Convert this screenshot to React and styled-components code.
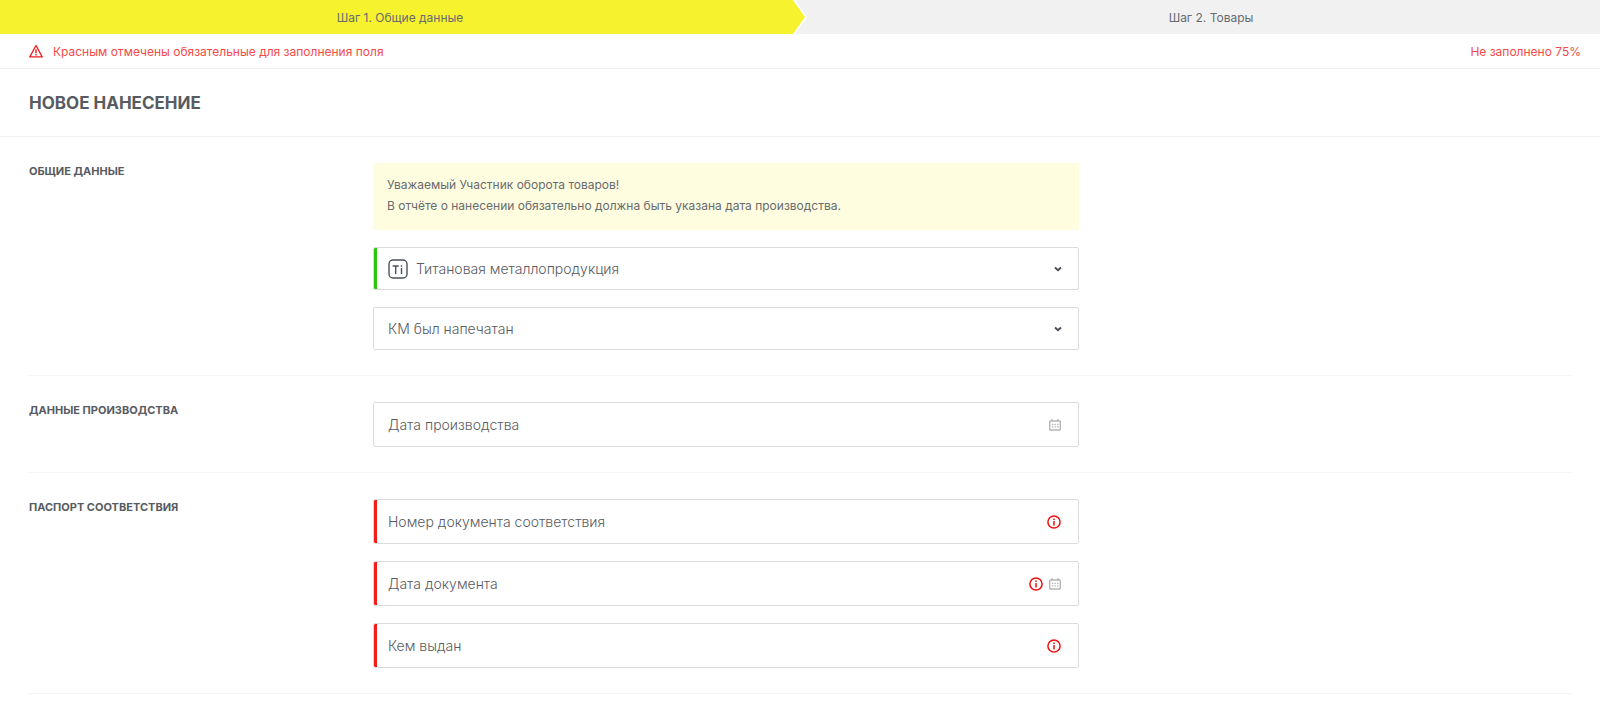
import React, { useState } from 'react';
import styled, { createGlobalStyle } from 'styled-components';

const GlobalStyle = createGlobalStyle`
  * {
    box-sizing: border-box;
  }

  body {
    margin: 0;
    background: #fff;
    color: #585b61;
    font-family: Inter, 'Liberation Sans', sans-serif;
    font-size: 12px;
  }
`;

const Steps = styled.ol`
  display: grid;
  grid-template-columns: 1fr 1fr;
  margin: 0;
  padding: 0;
  list-style: none;
`;

const Step = styled.li`
  display: flex;
  align-items: center;
  justify-content: center;
  height: 34px;
  color: #686b70;
  background: ${(props) => (props.$active ? '#f6f32e' : '#f1f1f1')};
  margin: ${(props) => (props.$active ? '0 -5px 0 0' : '0 0 0 -5px')};
  padding: ${(props) => (props.$active ? '0 5px 0 0' : '0 0 0 27px')};
  clip-path: ${(props) =>
    props.$active
      ? 'polygon(0 0, calc(100% - 12px) 0, 100% 50%, calc(100% - 12px) 100%, 0 100%)'
      : 'polygon(0 0, 100% 0, 100% 100%, 0 100%, 12px 50%)'};
`;

const Alert = styled.div`
  display: flex;
  align-items: center;
  justify-content: space-between;
  height: 35px;
  padding: 0 19px 0 29px;
  border-bottom: 1px solid #f1f1f1;
  color: #f44a4a;
`;

const AlertText = styled.span`
  display: flex;
  align-items: center;
  gap: 10px;
`;

const TitleRow = styled.header`
  display: flex;
  align-items: center;
  height: 68px;
  padding: 0 29px;
  border-bottom: 1px solid #f1f1f1;
`;

const Title = styled.h1`
  margin: 0;
  font-size: 17px;
  font-weight: 700;
  text-transform: uppercase;
`;

const Form = styled.form`
  padding: 0 29px;
`;

const Section = styled.section`
  display: grid;
  grid-template-columns: 172fr 353fr 246fr;
  padding: 26px 0 25px;
  border-bottom: 1px solid #f4f4f4;
`;

const SectionTitle = styled.h2`
  margin: 0;
  font-size: 11px;
  font-weight: 700;
  line-height: 16px;
  text-transform: uppercase;
`;

const Fields = styled.div`
  display: flex;
  flex-direction: column;
  gap: 17px;
`;

const Note = styled.p`
  margin: 0;
  padding: 11px 14px 14px;
  background: #fffddf;
  color: #686b70;
  line-height: 21px;
`;

const barColors = {
  valid: '#2bc60a',
  required: '#f51c1c',
};

const FieldBox = styled.div`
  display: flex;
  align-items: center;
  gap: 6px;
  height: ${(props) => (props.$select ? '43px' : '45px')};
  padding: 0 17px 0 14px;
  border: 1px solid #dcdcdc;
  border-radius: 2px;
  box-shadow: ${(props) => (props.$status ? `inset 3px 0 0 ${barColors[props.$status]}` : 'none')};

  &:focus-within {
    border-color: #a5a7ab;
  }
`;

const Control = styled.input`
  flex: 1;
  min-width: 0;
  height: 100%;
  margin: 0;
  padding: 0;
  border: 0;
  outline: 0;
  background: transparent;
  color: #585b61;
  font-family: inherit;
  font-size: 14px;
  font-weight: 300;

  &::placeholder {
    color: #585b61;
    opacity: 1;
  }
`;

const Select = styled(Control)`
  appearance: none;

  svg + & {
    padding-left: 2px;
  }
`;

const IconButton = styled.button`
  display: flex;
  padding: 0;
  border: 0;
  background: none;
  cursor: pointer;
`;

const WarningIcon = () => (
  <svg width="14" height="14" viewBox="0 0 14 14" fill="none" stroke="#ee1c1c" aria-hidden="true">
    <path d="M7 1.5 13.2 12.9H.8Z" strokeWidth="1.3" strokeLinejoin="round" />
    <path d="M7 5.2v4M7 10.1v1.5" strokeWidth="1.4" />
  </svg>
);

const TitaniumIcon = () => (
  <svg width="20" height="20" viewBox="0 0 20 20" fill="none" stroke="#4b515c" aria-hidden="true">
    <rect x="1" y="1" width="18" height="18" rx="4" strokeWidth="1.4" />
    <path d="M4.7 7h6M7.7 7v8M13.5 9v6M13.5 6.2v1.5" strokeWidth="1.4" />
  </svg>
);

const ChevronIcon = () => (
  <svg width="6" height="8" viewBox="2 0 6 8" fill="none" stroke="#4b4e54" overflow="visible" aria-hidden="true">
    <path d="M2 2.5 5 5.3l3-2.8" strokeWidth="1.9" />
  </svg>
);

const CalendarIcon = () => (
  <svg width="12" height="12" viewBox="0 0 12 12" fill="none" stroke="#b5b5b5" aria-hidden="true">
    <rect x=".7" y="2" width="10.6" height="9" rx=".8" strokeWidth="1.4" />
    <path d="M3 0v2M9 0v2" strokeWidth="1.4" />
    <path d="M3 5.4h6.5M3 7.8h6.5" strokeWidth="1.2" strokeDasharray="1.4 1.1" />
  </svg>
);

const InfoIcon = () => (
  <svg width="14" height="14" viewBox="0 0 14 14" fill="none" stroke="#f01010" aria-hidden="true">
    <circle cx="7" cy="7" r="6.1" strokeWidth="1.5" />
    <path d="M7 3.5v1.5M7 5.9v4.6" strokeWidth="1.5" />
  </svg>
);

function SelectField({ label, option, status, icon }) {
  return (
    <FieldBox $select $status={status}>
      {icon}
      <Select as="select" aria-label={label}>
        <option>{option}</option>
      </Select>
      <ChevronIcon />
    </FieldBox>
  );
}

function TextField({ label, required, date }) {
  const [value, setValue] = useState('');

  return (
    <FieldBox $status={required ? 'required' : undefined}>
      <Control
        type="text"
        aria-label={label}
        placeholder={label}
        required={required}
        value={value}
        onChange={(e) => setValue(e.target.value)}
      />
      {required && <InfoIcon />}
      {date && (
        <IconButton type="button" aria-label="Календарь">
          <CalendarIcon />
        </IconButton>
      )}
    </FieldBox>
  );
}

export default function App() {
  return (
    <>
      <GlobalStyle />
      <Steps>
        <Step $active aria-current="step">
          Шаг 1. Общие данные
        </Step>
        <Step>Шаг 2. Товары</Step>
      </Steps>
      <Alert>
        <AlertText>
          <WarningIcon />
          Красным отмечены обязательные для заполнения поля
        </AlertText>
        <span>Не заполнено 75%</span>
      </Alert>
      <TitleRow>
        <Title>Новое нанесение</Title>
      </TitleRow>
      <Form>
        <Section>
          <SectionTitle>Общие данные</SectionTitle>
          <Fields>
            <Note>
              Уважаемый Участник оборота товаров!
              <br />
              В отчёте о нанесении обязательно должна быть указана дата производства.
            </Note>
            <SelectField
              label="Товарная группа"
              option="Титановая металлопродукция"
              status="valid"
              icon={<TitaniumIcon />}
            />
            <SelectField label="Способ нанесения" option="КМ был напечатан" />
          </Fields>
        </Section>
        <Section>
          <SectionTitle>Данные производства</SectionTitle>
          <Fields>
            <TextField label="Дата производства" date />
          </Fields>
        </Section>
        <Section>
          <SectionTitle>Паспорт соответствия</SectionTitle>
          <Fields>
            <TextField label="Номер документа соответствия" required />
            <TextField label="Дата документа" required date />
            <TextField label="Кем выдан" required />
          </Fields>
        </Section>
      </Form>
    </>
  );
}
